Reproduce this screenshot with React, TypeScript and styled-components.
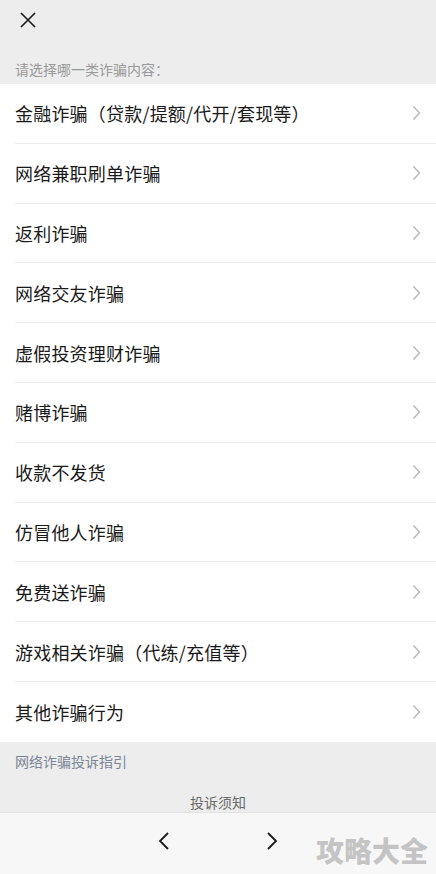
import React from "react";
import styled, { createGlobalStyle } from "styled-components";

const GlobalStyle = createGlobalStyle`
  html, body {
    margin: 0;
    padding: 0;
    background: #ededed;
  }
  body {
    font-family: "Noto Sans CJK SC", "Noto Sans", sans-serif;
  }
`;

const Page = styled.div`
  width: 436px;
  height: 874px;
  display: flex;
  flex-direction: column;
  background: #ededed;
  overflow: hidden;
`;

const Header = styled.div`
  height: 84px;
  display: flex;
  flex-direction: column;
  padding: 0 15px;
  box-sizing: border-box;
`;

const CloseButton = styled.button`
  width: 24px;
  height: 24px;
  margin-top: 8px;
  margin-left: 1px;
  padding: 0;
  border: none;
  background: none;
  display: flex;
  align-items: center;
  justify-content: center;
`;

const Hint = styled.div`
  margin-top: 27px;
  font-size: 14px;
  line-height: 20px;
  color: #999999;
`;

const List = styled.div`
  background: #ffffff;
  display: flex;
  flex-direction: column;
`;

const Row = styled.div<{ $last?: boolean }>`
  height: 59.8px;
  display: flex;
  align-items: center;
  margin-left: 15px;
  padding-right: 15px;
  box-sizing: border-box;
  border-bottom: ${({ $last }) => ($last ? "none" : "1px solid #ececec")};
`;

const Label = styled.span`
  flex: 1;
  font-size: 18px;
  color: #1a1a1a;
  letter-spacing: 0.2px;
`;

const Footer = styled.div`
  flex: 1;
  display: flex;
  flex-direction: column;
  padding: 0 15px;
`;

const GuideLink = styled.div`
  margin-top: 9px;
  font-size: 14px;
  line-height: 20px;
  color: #7c8596;
`;

const Notice = styled.div`
  margin-top: 21px;
  text-align: center;
  font-size: 14px;
  line-height: 20px;
  color: #6a6a6a;
`;

const BottomBar = styled.div`
  position: relative;
  height: 61px;
  background: #f7f7f7;
  border-top: 1px solid #e2e2e2;
  display: flex;
  align-items: center;
  justify-content: center;
  gap: 90px;
`;

const NavButton = styled.button`
  width: 18px;
  height: 24px;
  padding: 0;
  border: none;
  background: none;
  display: flex;
  align-items: center;
  justify-content: center;
  margin-top: -6px;
`;

const Watermark = styled.div`
  position: absolute;
  right: 8px;
  top: 22px;
  font-size: 28px;
  line-height: 30px;
  font-weight: 900;
  color: rgba(180, 180, 180, 0.75);
  font-family: "Noto Sans CJK SC", sans-serif;
`;

const Chevron = () => (
  <svg width="9" height="16" viewBox="0 0 9 16">
    <path d="M1.5 1.5 L7.5 8 L1.5 14.5" fill="none" stroke="#b8b8b8" strokeWidth="1.4" />
  </svg>
);

const items = [
  "金融诈骗（贷款/提额/代开/套现等）",
  "网络兼职刷单诈骗",
  "返利诈骗",
  "网络交友诈骗",
  "虚假投资理财诈骗",
  "赌博诈骗",
  "收款不发货",
  "仿冒他人诈骗",
  "免费送诈骗",
  "游戏相关诈骗（代练/充值等）",
  "其他诈骗行为",
];

export default function App() {
  return (
    <Page>
      <GlobalStyle />
      <Header>
        <CloseButton>
          <svg width="20" height="20" viewBox="0 0 20 20">
            <path d="M3 3 L17 17 M17 3 L3 17" stroke="#1a1a1a" strokeWidth="1.6" />
          </svg>
        </CloseButton>
        <Hint>请选择哪一类诈骗内容：</Hint>
      </Header>
      <List>
        {items.map((label, i) => (
          <Row key={label} $last={i === items.length - 1}>
            <Label>{label}</Label>
            <Chevron />
          </Row>
        ))}
      </List>
      <Footer>
        <GuideLink>网络诈骗投诉指引</GuideLink>
        <Notice>投诉须知</Notice>
      </Footer>
      <BottomBar>
        <NavButton>
          <svg width="12" height="20" viewBox="0 0 12 20">
            <path d="M10 2 L2 10 L10 18" fill="none" stroke="#1a1a1a" strokeWidth="1.8" />
          </svg>
        </NavButton>
        <NavButton>
          <svg width="12" height="20" viewBox="0 0 12 20">
            <path d="M2 2 L10 10 L2 18" fill="none" stroke="#1a1a1a" strokeWidth="1.8" />
          </svg>
        </NavButton>
        <Watermark>攻略大全</Watermark>
      </BottomBar>
    </Page>
  );
}
